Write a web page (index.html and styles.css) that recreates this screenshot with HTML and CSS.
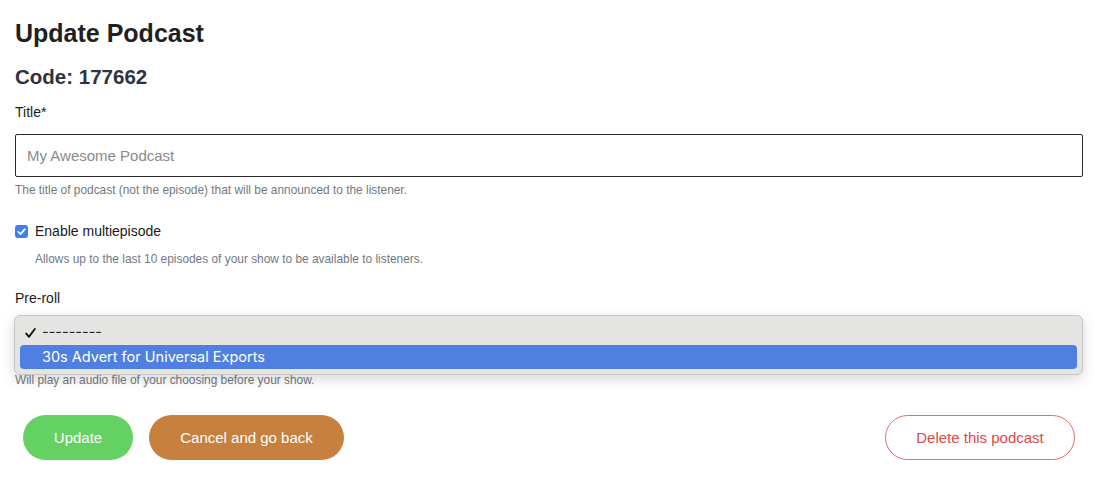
FILE: index.html
```html
<!DOCTYPE html>
<html lang="en">
<head>
<meta charset="utf-8">
<title>Update Podcast</title>
<link rel="stylesheet" href="styles.css">
</head>
<body>
<main class="page">
  <h1 class="title">Update Podcast</h1>
  <h2 class="code">Code: 177662</h2>
  <form class="form">
    <div class="field">
      <label class="label" for="t">Title*</label>
      <input id="t" class="input" type="text" placeholder="My Awesome Podcast">
      <p class="help">The title of podcast (not the episode) that will be announced to the listener.</p>
    </div>
    <div class="field check-field">
      <label class="check">
        <span class="box"><svg viewBox="0 0 14 14" width="14" height="14"><path d="M3.4 7.3 L5.9 9.8 L10.6 4.4" fill="none" stroke="#fff" stroke-width="1.8" stroke-linecap="round" stroke-linejoin="round"/></svg></span>
        <span>Enable multiepisode</span>
      </label>
      <p class="help indent">Allows up to the last 10 episodes of your show to be available to listeners.</p>
    </div>
    <div class="field preroll">
      <span class="label">Pre-roll</span>
      <div class="select-wrap">
        <div class="select"></div>
        <div class="menu">
          <div class="opt"><svg class="tick" viewBox="0 0 11 10" width="11" height="10"><path d="M1.2 5.6 L4 8.8 L9.8 1" fill="none" stroke="#111" stroke-width="1.9" stroke-linecap="round" stroke-linejoin="round"/></svg>---------</div>
          <div class="opt active">30s Advert for Universal Exports</div>
        </div>
      </div>
      <p class="help">Will play an audio file of your choosing before your show.</p>
    </div>
    <div class="actions">
      <div class="left">
        <button type="button" class="btn btn-green">Update</button>
        <button type="button" class="btn btn-brown">Cancel and go back</button>
      </div>
      <button type="button" class="btn btn-outline">Delete this podcast</button>
    </div>
  </form>
</main>
</body>
</html>
```
FILE: styles.css
```css
* { box-sizing: border-box; }
html, body { margin: 0; background: #fff; }
body {
  font-family: "Liberation Sans", Arial, Helvetica, sans-serif;
  color: #1a1a1a;
}
.page { padding: 18px 12px 0 15px; }
.title {
  margin: 0;
  font-size: 25px;
  line-height: 30px;
  font-weight: 700;
  color: #1f1f1f;
}
.code {
  margin: 17px 0 0;
  font-size: 20.5px;
  line-height: 24px;
  font-weight: 700;
  color: #2d3440;
}
.form { margin-top: 15px; }
.field { margin: 0; }
.label {
  display: block;
  font-size: 14px;
  line-height: 16px;
  color: #1a1a1a;
  margin-bottom: 14px;
}
.input {
  display: block;
  width: 100%;
  height: 43px;
  border: 1px solid #2a2a2a;
  border-radius: 2px;
  padding: 0 11px;
  font: inherit;
  font-size: 15px;
  color: #333;
  background: #fff;
}
.input::placeholder { color: #8a8a8a; }
.help {
  margin: 6px 0 0;
  font-size: 11.9px;
  line-height: 15px;
  color: #737882;
}
.check-field { margin-top: 25px; }
.check {
  display: flex;
  align-items: center;
  gap: 7px;
  font-size: 14px;
  line-height: 16px;
  color: #1a1a1a;
}
.box {
  width: 13px;
  height: 13px;
  border-radius: 3px;
  background: #3b7ff0;
  display: flex;
  align-items: center;
  justify-content: center;
}
.box svg { width: 13px; height: 13px; }
.indent { margin: 13px 0 0 20px; }
.preroll { margin-top: 23px; }
.preroll .label { margin-bottom: 11px; }
.select-wrap { position: relative; height: 46px; }
.select {
  height: 46px;
  border: 1px solid #ccc;
  border-radius: 4px;
}
.menu {
  position: absolute;
  left: -1px;
  right: 0;
  top: -2px;
  height: 60px;
  background: #e4e4e3;
  border: 1px solid #c6c6c6;
  border-radius: 6px;
  box-shadow: 0 4px 14px rgba(0,0,0,0.16);
  padding: 4px 5px;
  font-family: "Inter", "Liberation Sans", sans-serif;
  font-size: 14.5px;
}
.opt {
  height: 24px;
  line-height: 24px;
  padding-left: 22px;
  color: #222;
  position: relative;
  border-radius: 4px;
}
.opt.active {
  background: #4f80e1;
  color: #fff;
  margin-top: 1px;
}
.tick {
  position: absolute;
  left: 5px;
  top: 8px;
}
.select-wrap + .help { margin-top: 10px; }
.actions {
  margin-top: 27px;
  display: flex;
  justify-content: space-between;
  align-items: center;
  padding: 0 8px 0 8px;
}
.left { display: flex; gap: 16px; }
.btn {
  height: 45px;
  border-radius: 23px;
  border: 1px solid transparent;
  font-family: inherit;
  font-size: 15px;
  color: #fff;
  padding: 0;
  cursor: pointer;
}
.btn-green { background: #63d263; width: 110px; }
.btn-brown { background: #c7803e; width: 195px; }
.btn-outline {
  background: #fff;
  border-color: #e86a6a;
  color: #e0494b;
  width: 190px;
}
```
